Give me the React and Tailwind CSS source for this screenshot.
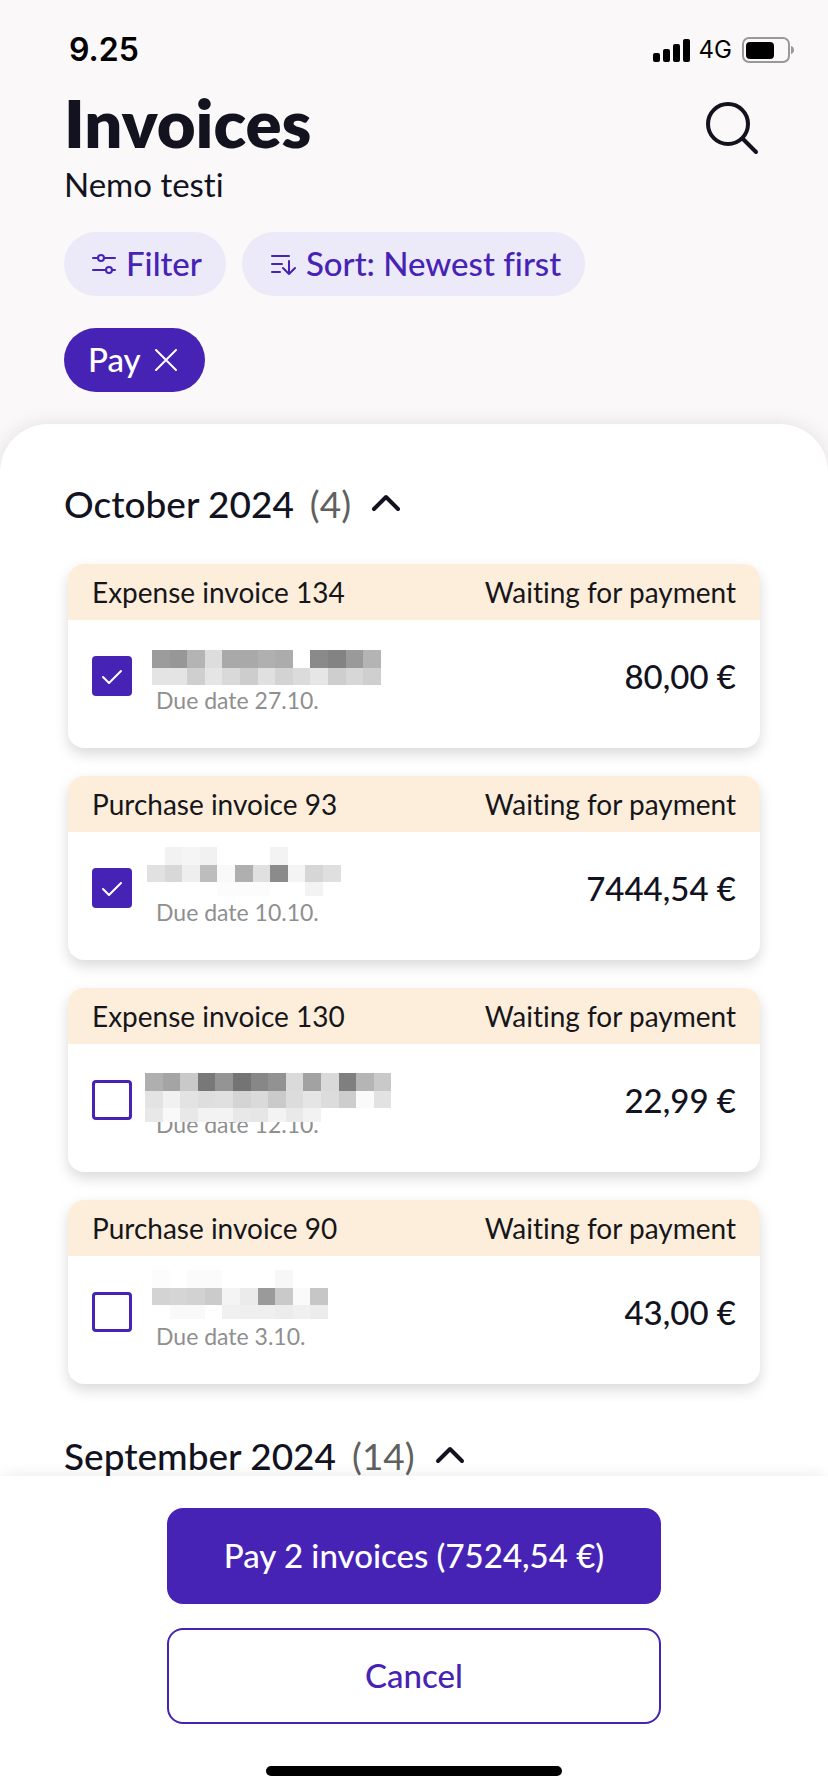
import React, { useState } from 'react'

const MONTHS = [
  {
    name: 'October 2024',
    count: 4,
    invoices: [
      {
        id: 134,
        title: 'Expense invoice 134',
        status: 'Waiting for payment',
        due: '27.10.',
        amount: '80,00 €',
        mask: {
          x: 8,
          y: 18,
          rows: [
            '9c 97 b4 dd a9 a9 b0 ac -- 8a 83 9a b4',
            'e4 e4 cf e5 d9 cd e0 d3 db e6 ce d7 cf',
          ],
        },
      },
      {
        id: 93,
        title: 'Purchase invoice 93',
        status: 'Waiting for payment',
        due: '10.10.',
        amount: '7444,54 €',
        mask: {
          x: 3,
          y: 3,
          rows: [
            '-- f2 f5 f1 -- -- -- f3 -- -- --',
            'e1 d8 ee bd f9 af e0 8b f4 d6 df',
            '-- -- -- -- fc fc fc -- -- f3 --',
          ],
        },
      },
      {
        id: 130,
        title: 'Expense invoice 130',
        status: 'Waiting for payment',
        due: '12.10.',
        amount: '22,99 €',
        mask: {
          x: 1,
          y: 17,
          rows: [
            'af a4 c9 78 94 74 87 92 da a2 d9 7f b5 c9',
            'e3 f1 e3 de e0 d4 da ca dc e5 dc cd fa e2',
            'e8 f9 e8 f3 f3 e8 e6 f3 e9 f2 -- -- -- --',
          ],
        },
      },
      {
        id: 90,
        title: 'Purchase invoice 90',
        status: 'Waiting for payment',
        due: '3.10.',
        amount: '43,00 €',
        mask: {
          x: 8,
          y: 2,
          rows: [
            'fc -- fb fb -- -- -- f7 -- --',
            'd3 d5 d2 cb f4 eb 9a c9 fa c6',
            '-- f9 f9 -- f0 ef ef ec f0 ec',
          ],
        },
      },
    ],
  },
  { name: 'September 2024', count: 14, invoices: [] },
]

function StatusBar() {
  return (
    <div className="flex h-20 items-center justify-between pt-5 pl-[69px] pr-[34px] font-['Inter',sans-serif] text-black">
      <span className="text-[32px] leading-10 font-semibold">9.25</span>
      <div className="flex items-center">
        <svg width="38" height="24" viewBox="0 0 38 24" fill="currentColor">
          <rect x="0" y="15" width="7" height="9" rx="2" />
          <rect x="10" y="11" width="7" height="13" rx="2" />
          <rect x="20" y="6" width="7" height="18" rx="2" />
          <rect x="30" y="1" width="7" height="23" rx="2" />
        </svg>
        <span className="ml-2 text-2xl">4G</span>
        <svg className="ml-2.5" width="52" height="26" viewBox="0 0 52 26" fill="none">
          <rect x="1" y="1" width="46" height="24" rx="6" stroke="#999" strokeWidth="2" />
          <rect x="4" y="5" width="28" height="17" rx="4" fill="currentColor" />
          <path d="M49 9c4 1 4 7 0 8z" fill="#999" />
        </svg>
      </div>
    </div>
  )
}

function Chevron({ open }) {
  return (
    <svg width="30" height="20" viewBox="0 0 30 20" fill="none" stroke="currentColor" strokeWidth="4" strokeLinecap="round" strokeLinejoin="round">
      <path d={open ? 'M3 15 15 3l12 12' : 'M3 4l12 12L27 4'} />
    </svg>
  )
}

// Hides the payee name behind a grid of grey cells
function NameMask({ mask }) {
  const size = 17.6
  return (
    <svg className="absolute -top-2 -left-3" width="260" height="68" viewBox="0 0 260 68" shapeRendering="crispEdges" aria-hidden="true">
      {mask.rows.map((row, r) =>
        row.split(' ').map((c, i) =>
          c === '--' ? null : (
            <rect
              key={`${r}-${i}`}
              x={mask.x + i * size}
              y={mask.y + r * size}
              width={size}
              height={r === 2 ? 14 : size}
              fill={`#${c}${c}${c}`}
            />
          )
        )
      )}
    </svg>
  )
}

function InvoiceCard({ invoice, checked, onToggle }) {
  return (
    <li className="overflow-hidden rounded-2xl bg-white shadow-[0_6px_14px_rgba(0,0,0,0.15)]">
      <div className="flex h-14 items-center justify-between bg-[#fdeedc] px-6 text-[28px] text-[#16161a]">
        <span>{invoice.title}</span>
        <span>{invoice.status}</span>
      </div>
      <label className="flex h-32 items-start pt-5 px-6">
        <span className="relative mt-4 size-10 shrink-0">
          <input
            type="checkbox"
            checked={checked}
            onChange={onToggle}
            className="peer block size-10 appearance-none rounded border-3 border-[#4623b5] bg-white checked:bg-[#4623b5]"
          />
          <svg className="absolute inset-0 hidden peer-checked:block" width="40" height="40" viewBox="0 0 40 40" fill="none" stroke="#fff" strokeWidth="2" strokeLinecap="round" strokeLinejoin="round">
            <path d="M11 21l6 6L29 15" />
          </svg>
        </span>
        <span className="relative ml-6 pt-11 text-[23px] leading-8 text-[#8f8f8f]">
          Due date {invoice.due}
          <NameMask mask={invoice.mask} />
        </span>
        <span className="ml-auto pt-4 text-[33px] leading-10 font-medium text-[#13131f]">{invoice.amount}</span>
      </label>
    </li>
  )
}

function MonthSection({ month, selected, onToggle }) {
  const [open, setOpen] = useState(true)
  return (
    <section className="mb-8">
      <button type="button" onClick={() => setOpen(!open)} className="flex h-20 items-center px-16 text-[37px] leading-10 text-[#13131f]">
        <span className="font-medium">{month.name}</span>
        <span className="ml-4 mr-5 text-[#606060]">({month.count})</span>
        <Chevron open={open} />
      </button>
      {open && (
        <ul className="mt-5 flex flex-col gap-7 px-17">
          {month.invoices.map((invoice) => (
            <InvoiceCard
              key={invoice.id}
              invoice={invoice}
              checked={selected.includes(invoice.id)}
              onToggle={() => onToggle(invoice.id)}
            />
          ))}
        </ul>
      )}
    </section>
  )
}

function App() {
  const [selected, setSelected] = useState([134, 93])

  const toggle = (id) => {
    setSelected(selected.includes(id) ? selected.filter((s) => s !== id) : [...selected, id])
  }

  return (
    <div className="flex h-screen flex-col overflow-hidden bg-[#faf8f9] font-['Lato',sans-serif] [font-variant-ligatures:none]">
      <StatusBar />

      <header className="px-16 pb-8 text-[#13131f]">
        <div className="flex items-start justify-between">
          <div>
            <h1 className="text-[67px] leading-[84px] font-extrabold">Invoices</h1>
            <p className="text-[33px] leading-10">Nemo testi</p>
          </div>
          <button type="button" aria-label="Search" className="mt-5">
            <svg width="60" height="56" viewBox="0 0 60 56" fill="none" stroke="currentColor" strokeWidth="4" strokeLinecap="round">
              <circle cx="24" cy="24" r="20" />
              <path d="M39 39l13 13" />
            </svg>
          </button>
        </div>

        <div className="mt-7 flex gap-4 text-[33px] font-medium text-[#4623b5]">
          <button type="button" className="flex h-16 items-center gap-2.5 rounded-full bg-[#ece9f8] pl-7 pr-6">
            <svg width="24" height="24" viewBox="0 0 24 24" fill="none" stroke="currentColor" strokeWidth="2" strokeLinecap="round">
              <path d="M1 6h5M12 6h11M1 18h13M20 18h3" />
              <circle cx="9" cy="6" r="3" />
              <circle cx="17" cy="18" r="3" />
            </svg>
            Filter
          </button>
          <button type="button" className="flex h-16 items-center gap-2.5 rounded-full bg-[#ece9f8] pl-7 pr-6">
            <svg width="26" height="24" viewBox="0 0 26 24" fill="none" stroke="currentColor" strokeWidth="2" strokeLinecap="round" strokeLinejoin="round">
              <path d="M2 4h17M2 12h10M2 20h8M19 9v13M13 16l6 6 6-6" />
            </svg>
            Sort: Newest first
          </button>
        </div>

        <button type="button" className="mt-8 flex h-16 items-center gap-3.5 rounded-full bg-[#4623b5] pl-6 pr-7 text-[33px] font-medium text-white">
          Pay
          <svg width="22" height="22" viewBox="0 0 22 22" fill="none" stroke="currentColor" strokeWidth="2" strokeLinecap="round">
            <path d="M1 1l20 20M21 1L1 21" />
          </svg>
        </button>
      </header>

      <main className="min-h-0 flex-1 overflow-hidden rounded-t-[48px] bg-white pt-10 shadow-[0_0_20px_rgba(0,0,0,0.10)]">
        {MONTHS.map((month) => (
          <MonthSection key={month.name} month={month} selected={selected} onToggle={toggle} />
        ))}
      </main>

      <footer className="relative flex flex-col items-center bg-white px-16 pt-8 pb-4 text-[33px] font-medium shadow-[0_-2px_16px_-4px_rgba(0,0,0,0.12)]">
        <button type="button" className="h-24 w-full max-w-[494px] rounded-2xl bg-[#4623b5] text-white">
          Pay 2 invoices (7524,54 €)
        </button>
        <button type="button" className="mt-6 h-24 w-full max-w-[494px] rounded-2xl border-2 border-[#4623b5] text-[#4623b5]">
          Cancel
        </button>
        <div className="mt-[42px] h-2.5 w-74 rounded-full bg-black" />
      </footer>
    </div>
  )
}

export default App
